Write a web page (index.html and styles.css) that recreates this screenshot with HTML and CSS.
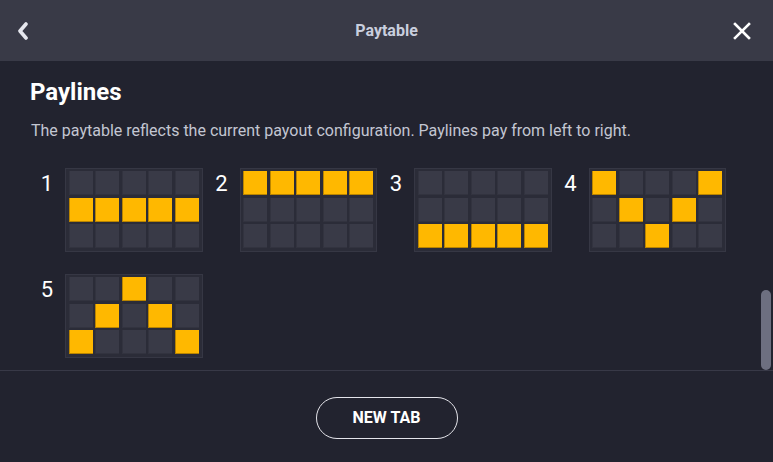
FILE: index.html
```html
<!DOCTYPE html>
<html lang="en">
<head>
    <meta charset="UTF-8">
    <meta name="viewport" content="width=device-width, initial-scale=1.0">
    <title>Paytable</title>
    <link rel="stylesheet" href="styles.css">
</head>
<body>
    <div class="modal">
        <header class="topbar">
            <button class="icon-btn" aria-label="Back">
                <svg width="14" height="18" viewBox="0 0 14 18"><path d="M10 2 L4 9 L10 16" fill="none" stroke="#e6e7ee" stroke-width="3.6" stroke-linecap="round" stroke-linejoin="round"/></svg>
            </button>
            <h2 class="title">Paytable</h2>
            <button class="icon-btn" aria-label="Close">
                <svg width="18" height="18" viewBox="0 0 18 18"><path d="M2 2 L16 16 M16 2 L2 16" fill="none" stroke="#ffffff" stroke-width="2.6" stroke-linecap="square"/></svg>
            </button>
        </header>

        <div class="content">
            <h1>Paylines</h1>
            <p class="desc">The paytable reflects the current payout configuration. Paylines pay from left to right.</p>

            <div class="lines" id="lines"></div>

            <div class="scroll-thumb"></div>
        </div>

        <footer class="footer">
            <button class="new-tab">NEW TAB</button>
        </footer>
    </div>

    <script>
        // row index (0 = top) of the winning cell per reel
        var paylines = [
            [1, 1, 1, 1, 1],
            [0, 0, 0, 0, 0],
            [2, 2, 2, 2, 2],
            [0, 1, 2, 1, 0],
            [2, 1, 0, 1, 2]
        ];

        var wrap = document.getElementById('lines');
        paylines.forEach(function(line, i) {
            var item = document.createElement('div');
            item.className = 'line';

            var num = document.createElement('span');
            num.className = 'line-num';
            num.textContent = i + 1;
            item.appendChild(num);

            var grid = document.createElement('div');
            grid.className = 'grid';
            for (var r = 0; r < 3; r++) {
                for (var c = 0; c < 5; c++) {
                    var cell = document.createElement('div');
                    cell.className = line[c] === r ? 'cell on' : 'cell';
                    grid.appendChild(cell);
                }
            }
            item.appendChild(grid);
            wrap.appendChild(item);
        });
    </script>
</body>
</html>
```

FILE: styles.css
```css
* {
    box-sizing: border-box;
}
html, body {
    margin: 0;
    height: 100%;
}
body {
    font-family: Roboto, "Noto Sans", Arial, sans-serif;
    background-color: #22232f;
    color: #fff;
}
.modal {
    display: flex;
    flex-direction: column;
    height: 462px;
}
.topbar {
    height: 61px;
    flex: none;
    background: #393a47;
    display: flex;
    align-items: center;
    justify-content: space-between;
    padding: 0 17px 0 9px;
}
.icon-btn {
    background: none;
    border: none;
    padding: 0;
    width: 28px;
    height: 28px;
    display: flex;
    align-items: center;
    justify-content: center;
    cursor: pointer;
}
.title {
    margin: 0 0 0 8px;
    font-size: 16px;
    font-weight: 700;
    color: #c9cede;
}
.content {
    flex: 1;
    position: relative;
    padding: 16px 30px 0 30px;
    border-bottom: 1px solid #383947;
    overflow: hidden;
}
h1 {
    margin: 0;
    font-size: 24px;
    font-weight: 700;
    line-height: 30px;
}
.desc {
    margin: 14px 0 0 1px;
    font-size: 16px;
    color: #c3c6d2;
    line-height: 20px;
}
.lines {
    display: flex;
    flex-wrap: wrap;
    column-gap: 7px;
    row-gap: 22px;
    margin: 27px 0 0 5px;
    width: 700px;
}
.line {
    display: flex;
    align-items: flex-start;
}
.line-num {
    width: 24px;
    margin-right: 6px;
    text-align: center;
    font-size: 22px;
    line-height: 31px;
}
.grid {
    display: grid;
    grid-template-columns: repeat(5, 24px);
    grid-auto-rows: 24px;
    gap: 2.5px;
    padding: 2px 3px 3px 2.5px;
    background: #2b2c38;
    border: 1px solid #363744;
}
.cell {
    background: #393a47;
    box-shadow: inset 1px -1px 0 #32333f;
}
.cell.on {
    background: #ffb800;
    box-shadow: inset 1px -1px 0 #b98400;
}
.scroll-thumb {
    position: absolute;
    right: 2px;
    bottom: 0;
    width: 10px;
    height: 80px;
    border-radius: 5px;
    background: #6d6f80;
}
.footer {
    height: 91px;
    flex: none;
    display: flex;
    align-items: center;
    justify-content: center;
    padding-top: 2px;
}
.new-tab {
    width: 142px;
    height: 42px;
    border: 1.5px solid #e4e4ea;
    border-radius: 21px;
    background: transparent;
    color: #fff;
    font-family: Roboto, Arial, sans-serif;
    font-size: 16px;
    font-weight: 700;
    cursor: pointer;
}
```
